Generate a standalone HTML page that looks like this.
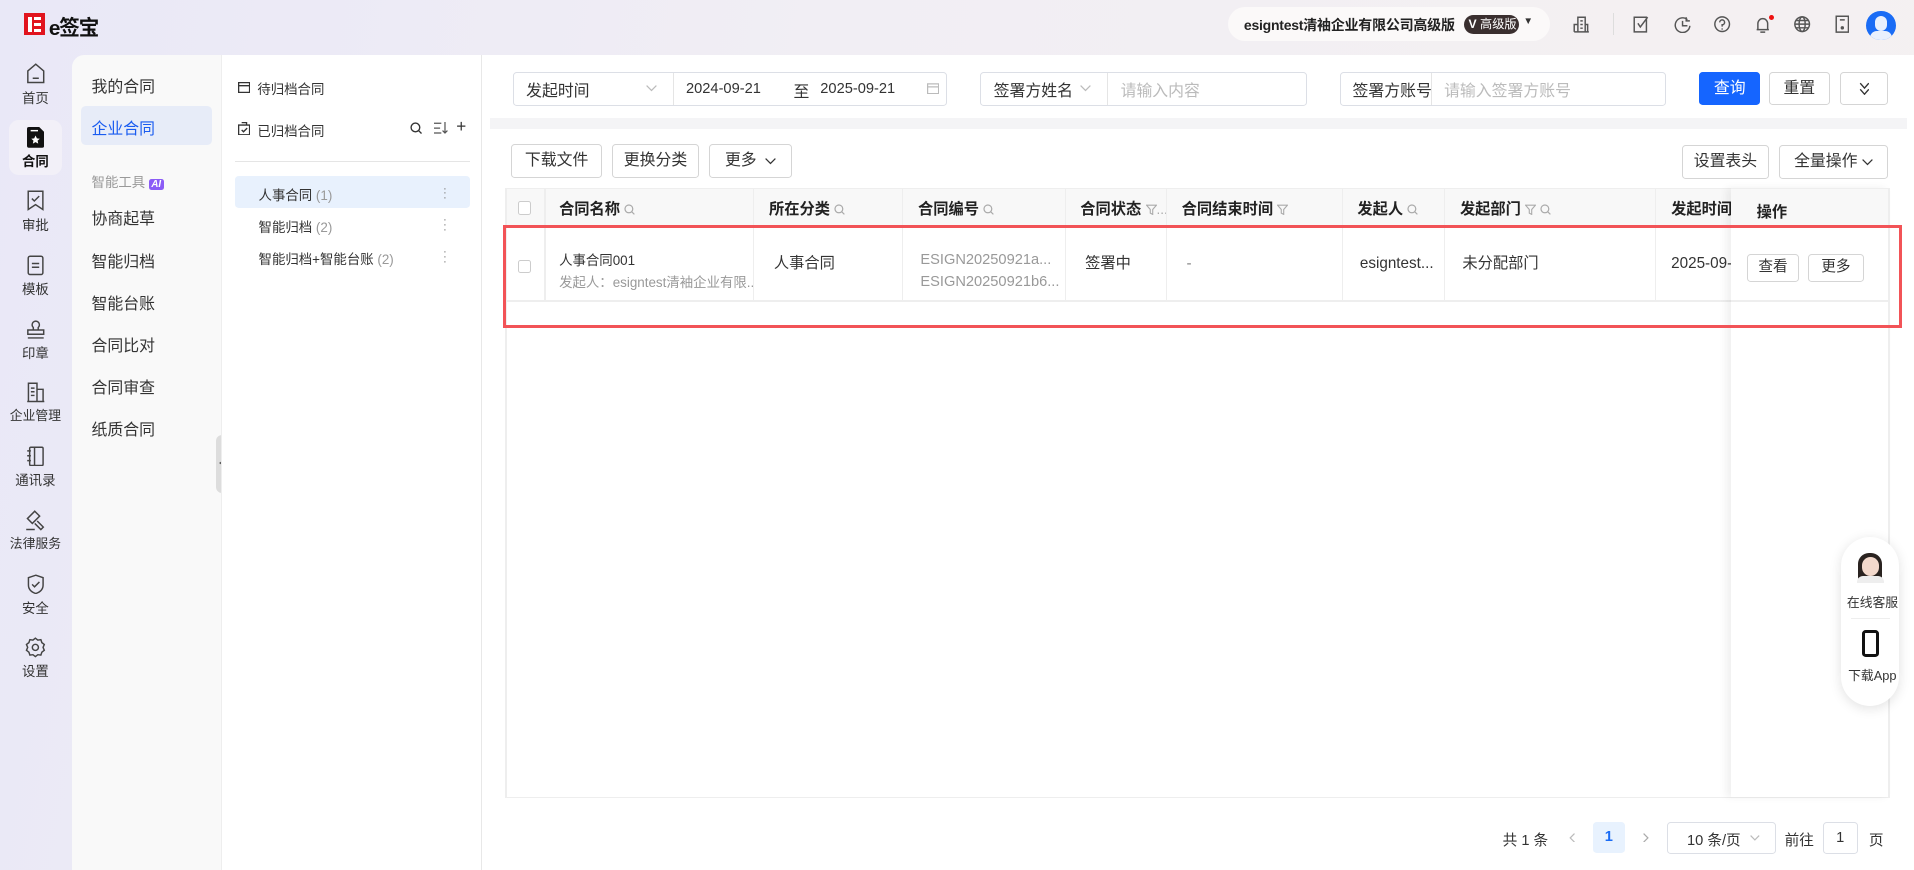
<!DOCTYPE html>
<html><head><meta charset="utf-8">
<style>
*{box-sizing:border-box;margin:0;padding:0}
html,body{width:1914px;height:870px;overflow:hidden}
#root{zoom:1.2207;width:1568px;height:713px;position:relative;overflow:hidden;font-family:"Liberation Sans","Noto Sans CJK SC",sans-serif;color:#333;background:linear-gradient(100deg,#e9e8f7 0%,#f1eef4 40%,#f5f1f1 100%);font-size:13px}
.a{position:absolute}
.rail .it{position:absolute;left:7px;width:44px;text-align:center;font-size:11px;color:#333}
.rail svg{display:block;margin:0 auto 2px}
.p2{left:59px;top:45px;width:123px;height:668px;background:#f9f9f9;border-radius:10px 0 0 0}
.p2 .m{position:absolute;left:16px;font-size:13px;color:#333}
.p3{left:181px;top:45px;width:214px;height:668px;background:#fff;border-left:1px solid #eee;border-right:1px solid #e8e8e8}
.main{left:395px;top:45px;width:1173px;height:668px;background:#fff}
.box{position:absolute;border:1px solid #dcdfe6;border-radius:3px;background:#fff}
.btn{position:absolute;border:1px solid #d5d5d5;border-radius:3px;background:#fff;text-align:center;font-size:13px;line-height:26px;color:#333}
.th{position:absolute;top:154px;height:32px;line-height:36px;font-weight:bold;font-size:12.5px;color:#222;border-right:1px solid #eee;padding-left:12px;white-space:nowrap;overflow:hidden}
.td{position:absolute;top:186px;height:60px;border-right:1px solid #eee;font-size:12.5px;color:#333;padding-left:12px;white-space:nowrap}
.ic{color:#aaa;font-weight:normal;font-size:11px}
.s{display:inline-block;width:9px;height:9px;vertical-align:-1px}
.gray{color:#999}
</style></head><body><div id="root">
<svg width="0" height="0" style="position:absolute"><defs><symbol id="mg" viewBox="0 0 9 9"><circle cx="4" cy="4" r="3.2" fill="none" stroke="#aaa" stroke-width="1"/><path d="M6.3 6.3L8.5 8.5" stroke="#aaa" stroke-width="1"/></symbol><symbol id="fl" viewBox="0 0 9 9"><path d="M.5 1h8L5.5 4.5V8.5L3.5 7.5V4.5z" fill="none" stroke="#aaa" stroke-width=".9"/></symbol></defs></svg>

<!-- logo -->
<div class="a" style="left:20px;top:11px;width:17px;height:18px;background:#e1141e"><div class="a" style="left:3px;top:3px;width:3px;height:12px;background:#fff"></div><div class="a" style="left:8px;top:3px;width:6px;height:2px;background:#fff"></div><div class="a" style="left:8px;top:8px;width:6px;height:2px;background:#fff"></div><div class="a" style="left:8px;top:13px;width:6px;height:2px;background:#fff"></div></div>
<div class="a" style="left:40px;top:9px;font-size:17px;font-weight:bold;color:#111;letter-spacing:-1px">e签宝</div>

<!-- top right -->
<div class="a" style="left:1006px;top:6px;width:264px;height:28px;background:#fbf9f9;border-radius:14px"></div>
<div class="a" style="left:1019px;top:12px;font-size:11.5px;font-weight:bold;color:#222;letter-spacing:-.2px">esigntest清袖企业有限公司高级版</div>
<div class="a" style="left:1199px;top:12px;width:45px;height:16px;background:#3a2f2f;border-radius:8px;color:#fff;font-size:10px;line-height:16px;padding-left:4px"><b>V</b> 高级版</div>
<div class="a" style="left:1248px;top:13px;font-size:8px;color:#333">▼</div>
<svg class="a" style="left:1289px;top:13px" width="14" height="14" viewBox="0 0 14 14" fill="none" stroke="#555" stroke-width="1.2"><path d="M4 13V1h6v12M1 13h12M1 13V7h3M6 4h2M6 7h2M6 10h2M10 7h2v6"/></svg>
<div class="a" style="left:1321px;top:11px;width:1px;height:18px;background:#ddd"></div>
<svg class="a" style="left:1338px;top:13px" width="14" height="14" fill="none" stroke="#555" stroke-width="1.2"><path d="M1 1h10v12H1zM4 6l2 3 6-8"/></svg>
<svg class="a" style="left:1371px;top:13px" width="14" height="14" fill="none" stroke="#555" stroke-width="1.2"><path d="M11 3A6 6 0 1 0 13 8M7 4v4h4M10 1v3h3"/></svg>
<svg class="a" style="left:1403px;top:12px" width="15" height="15" fill="none" stroke="#555" stroke-width="1.2"><circle cx="7.5" cy="7.5" r="6"/><path d="M5.5 6a2 2 0 1 1 2 2v1.5M7.5 11v1"/></svg>
<svg class="a" style="left:1436px;top:12px" width="16" height="16" fill="none" stroke="#555" stroke-width="1.2"><path d="M3 12h10M4 12V7a4 4 0 0 1 8 0v5M6 14h4"/></svg>
<div class="a" style="left:1449px;top:12px;width:4px;height:4px;border-radius:2px;background:#e11"></div>
<svg class="a" style="left:1469px;top:12px" width="15" height="15" fill="none" stroke="#555" stroke-width="1.2"><circle cx="7.5" cy="7.5" r="6"/><ellipse cx="7.5" cy="7.5" rx="2.5" ry="6"/><path d="M1.5 7.5h12M2.5 4.5h10M2.5 10.5h10"/></svg>
<svg class="a" style="left:1503px;top:12px" width="12" height="15" fill="none" stroke="#555" stroke-width="1.2"><path d="M1 1h10v13H1zM4 4h4"/><circle cx="6" cy="10.5" r=".8" fill="#555"/></svg>
<div class="a" style="left:1529px;top:9px;width:24px;height:24px;border-radius:12px;background:#1a6cf5;overflow:hidden"><div class="a" style="left:7px;top:4px;width:10px;height:12px;border-radius:5px;background:#e9f0fd"></div><div class="a" style="left:3px;top:16px;width:18px;height:12px;border-radius:9px;background:#e9f0fd"></div></div>

<!-- rail -->
<div class="rail">
<div class="a" style="left:7px;top:98px;width:44px;height:45px;background:#f2f0f8;border-radius:8px"></div>
<div class="it" style="top:52px"><svg width="16" height="17" fill="none" stroke="#444" stroke-width="1.2"><path d="M1.5 6.5L8 1l6.5 5.5V16h-13zM5.5 12.5h5"/></svg>首页</div>
<div class="it" style="top:104px;font-weight:bold;color:#111"><svg width="14" height="17"><path d="M0 1.5Q0 0 1.5 0H10L14 4V15.5Q14 17 12.5 17H1.5Q0 17 0 15.5Z" fill="#111"/><path d="M3 3h6" stroke="#fff" stroke-width="1.2"/><path d="M7 7l1.1 2.3 2.4.3-1.8 1.6.5 2.4L7 12.4l-2.2 1.2.5-2.4-1.8-1.6 2.4-.3z" fill="#fff"/></svg>合同</div>
<div class="it" style="top:156px"><svg width="14" height="17" fill="none" stroke="#444" stroke-width="1.2"><path d="M1 1h12v15l-6-4-6 4zM4 7l2 2 4-4"/></svg>审批</div>
<div class="it" style="top:209px"><svg width="14" height="17" fill="none" stroke="#444" stroke-width="1.2"><rect x="1" y="1" width="12" height="15" rx="1.5"/><path d="M4 7h6M4 10h6"/></svg>模板</div>
<div class="it" style="top:261px"><svg width="16" height="17" fill="none" stroke="#444" stroke-width="1.2"><path d="M6 9V7a3 3 0 1 1 4 0v2M1.5 12.5V9h13v3.5zM1.5 15.5h13"/></svg>印章</div>
<div class="it" style="top:313px;font-size:10.5px;left:3px;width:52px"><svg width="16" height="17" fill="none" stroke="#444" stroke-width="1.2"><path d="M2 16V1h7v15M1 16h14M9 6h5v10M4 5h3M4 8h3M4 11h3"/></svg>企业管理</div>
<div class="it" style="top:365px"><svg width="16" height="17" fill="none" stroke="#444" stroke-width="1.2"><rect x="3" y="1" width="11" height="15" rx="1"/><path d="M1 4h3M1 8h3M1 12h3M7 1v15"/></svg>通讯录</div>
<div class="it" style="top:418px;font-size:10.5px;left:3px;width:52px"><svg width="17" height="17" fill="none" stroke="#444" stroke-width="1.2"><path d="M8 1l4 4-6 6-4-4zM10 9l5 5-2 2-5-5M1 16h7"/></svg>法律服务</div>
<div class="it" style="top:470px"><svg width="16" height="17" fill="none" stroke="#444" stroke-width="1.2"><path d="M8 1l6 2v6c0 4-3 6-6 7-3-1-6-3-6-7V3zM5 8.5l2 2 4-4"/></svg>安全</div>
<div class="it" style="top:522px"><svg width="17" height="17" fill="none" stroke="#444" stroke-width="1.2"><path d="M8.5 1l2 1.5 2.5-.3.8 2.4 2 1.5-1 2.4 1 2.4-2 1.5-.8 2.4-2.5-.3-2 1.5-2-1.5-2.5.3-.8-2.4-2-1.5 1-2.4-1-2.4 2-1.5.8-2.4 2.5.3z"/><circle cx="8.5" cy="8.5" r="2.5"/></svg>设置</div>
</div>

<!-- panel 2 -->
<div class="a p2">
<div class="m" style="top:16px">我的合同</div>
<div class="a" style="left:7px;top:42px;width:108px;height:32px;background:#e7ecf8;border-radius:4px"></div>
<div class="m" style="top:50px;color:#1a5cf0">企业合同</div>
<div class="m" style="top:95px;font-size:11px;color:#999">智能工具 <span style="background:#8b5cf6;color:#fff;font-size:8px;font-weight:bold;font-style:italic;padding:0 2px;border-radius:2px">AI</span></div>
<div class="m" style="top:124px">协商起草</div>
<div class="m" style="top:159px">智能归档</div>
<div class="m" style="top:193px">智能台账</div>
<div class="m" style="top:228px">合同比对</div>
<div class="m" style="top:262px">合同审查</div>
<div class="m" style="top:297px">纸质合同</div>
</div>
<div class="a" style="left:177px;top:356px;width:10px;height:48px;background:#ddd;border-radius:5px"><div class="a" style="left:2px;top:20px;width:0;height:0;border-right:5px solid #555;border-top:4px solid transparent;border-bottom:4px solid transparent"></div></div>

<!-- panel 3 -->
<div class="a p3">
<svg class="a" style="left:13px;top:22px" width="10" height="9" fill="none" stroke="#333" stroke-width="1.1"><path d="M.5.5h9v8h-9zM.5 3h9"/></svg>
<div class="a" style="left:29px;top:19px;font-size:11px">待归档合同</div>
<svg class="a" style="left:13px;top:55px" width="10" height="11" fill="none" stroke="#333" stroke-width="1.1"><path d="M.5 2.5h9v8h-9zM3 .5h4v2M3 6.5l1.5 1.5 3-3"/></svg>
<div class="a" style="left:29px;top:53px;font-size:11px">已归档合同</div>
<svg class="a" style="left:154px;top:55px" width="10" height="10" viewBox="0 0 9 9"><circle cx="4" cy="4" r="3.2" fill="none" stroke="#333" stroke-width="1"/><path d="M6.3 6.3L8.5 8.5" stroke="#333" stroke-width="1"/></svg>
<svg class="a" style="left:174px;top:55px" width="11" height="10" fill="none" stroke="#555" stroke-width="1"><path d="M0 1h6M0 5h5M0 9h6M9 0v9M7 7l2 2 2-2"/></svg>
<div class="a" style="left:192px;top:51px;font-size:14px">+</div>
<div class="a" style="left:11px;top:87px;width:192px;height:1px;background:#e5e5e5"></div>
<div class="a" style="left:11px;top:99px;width:192px;height:26px;background:#e8f1fd;border-radius:3px"></div>
<div class="a" style="left:30px;top:106px;font-size:11px">人事合同 <span class="gray">(1)</span></div>
<div class="a" style="left:30px;top:132px;font-size:11px">智能归档 <span class="gray">(2)</span></div>
<div class="a" style="left:30px;top:158px;font-size:11px">智能归档+智能台账 <span class="gray">(2)</span></div>
<div class="a" style="left:181px;top:107px;font-size:10px;color:#888;line-height:4px">·<br>·<br>·</div>
<div class="a" style="left:181px;top:133px;font-size:10px;color:#888;line-height:4px">·<br>·<br>·</div>
<div class="a" style="left:181px;top:159px;font-size:10px;color:#888;line-height:4px">·<br>·<br>·</div>
</div>

<!-- main -->
<div class="a main"></div>
<div class="box" style="left:420px;top:59px;width:356px;height:28px"></div>
<div class="a" style="left:551px;top:60px;width:1px;height:26px;background:#e5e5e5"></div>
<div class="a" style="left:431px;top:64px">发起时间</div>
<svg class="a" style="left:529px;top:70px" width="9" height="6" fill="none" stroke="#bbb"><path d="M.5.5l4 4 4-4"/></svg>
<div class="a" style="left:562px;top:66px;font-size:12px">2024-09-21</div>
<div class="a" style="left:650px;top:65px">至</div>
<div class="a" style="left:672px;top:66px;font-size:12px">2025-09-21</div>
<svg class="a" style="left:759px;top:67px" width="10" height="10" fill="none" stroke="#bbb"><path d="M.5 1.5h9v8h-9zM.5 4h9"/></svg>
<div class="box" style="left:803px;top:59px;width:268px;height:28px"></div>
<div class="a" style="left:907px;top:60px;width:1px;height:26px;background:#e5e5e5"></div>
<div class="a" style="left:814px;top:64px">签署方姓名</div>
<svg class="a" style="left:885px;top:70px" width="9" height="6" fill="none" stroke="#bbb"><path d="M.5.5l4 4 4-4"/></svg>
<div class="a" style="left:918px;top:64px;color:#bbb">请输入内容</div>
<div class="box" style="left:1098px;top:59px;width:267px;height:28px"></div>
<div class="a" style="left:1172px;top:60px;width:1px;height:26px;background:#e5e5e5"></div>
<div class="a" style="left:1108px;top:64px">签署方账号</div>
<div class="a" style="left:1183px;top:64px;color:#bbb">请输入签署方账号</div>
<div class="btn" style="left:1392px;top:59px;width:50px;height:27px;background:#1565ff;border-color:#1565ff;color:#fff">查询</div>
<div class="btn" style="left:1449px;top:59px;width:50px;height:27px">重置</div>
<div class="btn" style="left:1507px;top:59px;width:40px;height:27px"><svg style="margin-top:7px" width="9" height="11" fill="none" stroke="#333" stroke-width="1.1"><path d="M1 1l3.5 4L8 1M1 6l3.5 4L8 6"/></svg></div>
<div class="a" style="left:401px;top:97px;width:1161px;height:9px;background:#f4f4f6"></div>

<div class="btn" style="left:419px;top:118px;width:74px;height:28px">下载文件</div>
<div class="btn" style="left:501px;top:118px;width:72px;height:28px">更换分类</div>
<div class="btn" style="left:581px;top:118px;width:68px;height:28px">更多 &nbsp;<svg width="9" height="6" fill="none" stroke="#333"><path d="M.5.5l4 4 4-4"/></svg></div>
<div class="btn" style="left:1378px;top:119px;width:71px;height:28px">设置表头</div>
<div class="btn" style="left:1457px;top:119px;width:90px;height:28px">全量操作 <svg width="9" height="6" fill="none" stroke="#333"><path d="M.5.5l4 4 4-4"/></svg></div>

<!-- table -->
<div class="a" style="left:414px;top:154px;width:1134px;height:32px;background:#f8f8f8;border-top:1px solid #eee"></div>
<div class="a" style="left:414px;top:186px;width:1134px;height:1px;background:#eee"></div>
<div class="a" style="left:414px;top:246px;width:1134px;height:1px;background:#eee"></div>
<div class="a" style="left:414px;top:154px;width:1px;height:500px;background:#eee"></div>
<div class="a" style="left:414px;top:653px;width:1134px;height:1px;background:#eee"></div>
<div class="a" style="left:424px;top:165px;width:11px;height:11px;border:1px solid #ccc;border-radius:2px;background:#fff"></div>
<div class="a" style="left:424px;top:213px;width:11px;height:11px;border:1px solid #ccc;border-radius:2px;background:#fff"></div>
<div class="a" style="left:446px;top:154px;width:1px;height:92px;background:#eee"></div>
<div class="th" style="left:446px;width:172px">合同名称 <svg class="s"><use href="#mg"/></svg></div>
<div class="th" style="left:618px;width:122px">所在分类 <svg class="s"><use href="#mg"/></svg></div>
<div class="th" style="left:740px;width:133px">合同编号 <svg class="s"><use href="#mg"/></svg></div>
<div class="th" style="left:873px;width:83px">合同状态 <svg class="s"><use href="#fl"/></svg><span class="ic">...</span></div>
<div class="th" style="left:956px;width:144px">合同结束时间 <svg class="s"><use href="#fl"/></svg></div>
<div class="th" style="left:1100px;width:84px">发起人 <svg class="s"><use href="#mg"/></svg></div>
<div class="th" style="left:1184px;width:173px">发起部门 <svg class="s"><use href="#fl"/></svg> <svg class="s"><use href="#mg"/></svg></div>
<div class="th" style="left:1357px;width:61px;border:0">发起时间</div>
<div class="td" style="left:446px;width:172px;padding-top:19px;font-size:11px;line-height:18px;overflow:hidden">人事合同001<br><span class="gray">发起人：esigntest清袖企业有限...</span></div>
<div class="td" style="left:618px;width:122px;line-height:60px;padding-left:16px">人事合同</div>
<div class="td" style="left:740px;width:133px;padding-top:19px;line-height:18px;color:#999;font-size:12px;padding-left:14px;overflow:hidden">ESIGN20250921a...<br>ESIGN20250921b6...</div>
<div class="td" style="left:873px;width:83px;line-height:60px;padding-left:16px">签署中</div>
<div class="td" style="left:956px;width:144px;line-height:60px;padding-left:16px;color:#888">-</div>
<div class="td" style="left:1100px;width:84px;line-height:60px;padding-left:14px">esigntest...</div>
<div class="td" style="left:1184px;width:173px;line-height:60px;padding-left:14px">未分配部门</div>
<div class="td" style="left:1357px;width:61px;line-height:60px;border:0;overflow:hidden">2025-09-21</div>
<!-- fixed col -->
<div class="a" style="left:1418px;top:154px;width:130px;height:499px;background:#fff;box-shadow:-4px 0 6px rgba(0,0,0,.06)"></div>
<div class="a" style="left:1418px;top:154px;width:130px;height:32px;background:#f8f8f8;border-top:1px solid #eee;border-bottom:1px solid #eee"></div>
<div class="a" style="left:1418px;top:246px;width:130px;height:1px;background:#eee"></div>
<div class="a" style="left:1439px;top:164px;font-weight:bold;font-size:12.5px;color:#222">操作</div>
<div class="btn" style="left:1431px;top:208px;width:43px;height:23px;line-height:21px;font-size:12px">查看</div>
<div class="btn" style="left:1481px;top:208px;width:46px;height:23px;line-height:21px;font-size:12px">更多</div>
<div class="a" style="left:1547px;top:154px;width:1px;height:500px;background:#eee"></div>
<!-- red box -->
<div class="a" style="left:412px;top:184px;width:1146px;height:85px;border:3px solid #f25357"></div>

<!-- pagination -->
<div class="a" style="left:1231px;top:679px;font-size:12px">共 1 条</div>
<svg class="a" style="left:1285px;top:682px" width="5" height="8" fill="none" stroke="#bbb"><path d="M4.5.5L1 4l3.5 3.5"/></svg>
<div class="a" style="left:1305px;top:673px;width:26px;height:26px;background:#e8f2fe;border-radius:3px;color:#1a6cf5;text-align:center;line-height:26px;font-weight:bold;font-size:12px">1</div>
<svg class="a" style="left:1346px;top:682px" width="5" height="8" fill="none" stroke="#aaa"><path d="M.5.5L4 4 .5 7.5"/></svg>
<div class="box" style="left:1366px;top:673px;width:89px;height:27px"></div>
<div class="a" style="left:1382px;top:679px;font-size:12px">10 条/页</div>
<svg class="a" style="left:1434px;top:684px" width="8" height="5" fill="none" stroke="#bbb"><path d="M.5.5l3.5 3.5 3.5-3.5"/></svg>
<div class="a" style="left:1462px;top:679px;font-size:12px">前往</div>
<div class="box" style="left:1493px;top:673px;width:29px;height:27px;text-align:center;line-height:25px;font-size:12px">1</div>
<div class="a" style="left:1531px;top:679px;font-size:12px">页</div>

<!-- float -->
<div class="a" style="left:1508px;top:440px;width:48px;height:138px;background:#fff;border-radius:24px;box-shadow:0 2px 10px rgba(0,0,0,.12)"></div>
<div class="a" style="left:1522px;top:453px;width:20px;height:22px;border-radius:9px 9px 2px 2px;background:#2a2320"></div>
<div class="a" style="left:1525px;top:456px;width:14px;height:16px;border-radius:7px;background:#f3d9cc"></div>
<div class="a" style="left:1521px;top:472px;width:22px;height:6px;border-radius:5px 5px 0 0;background:#eee"></div>
<div class="a" style="left:1513px;top:485px;font-size:10.5px;color:#333">在线客服</div>
<div class="a" style="left:1516px;top:506px;width:32px;height:1px;background:#eee"></div>
<div class="a" style="left:1525px;top:516px;width:14px;height:22px;border:2.5px solid #111;border-radius:3px"></div>
<div class="a" style="left:1514px;top:545px;font-size:10.5px;color:#333">下载App</div>

</div></body></html>
